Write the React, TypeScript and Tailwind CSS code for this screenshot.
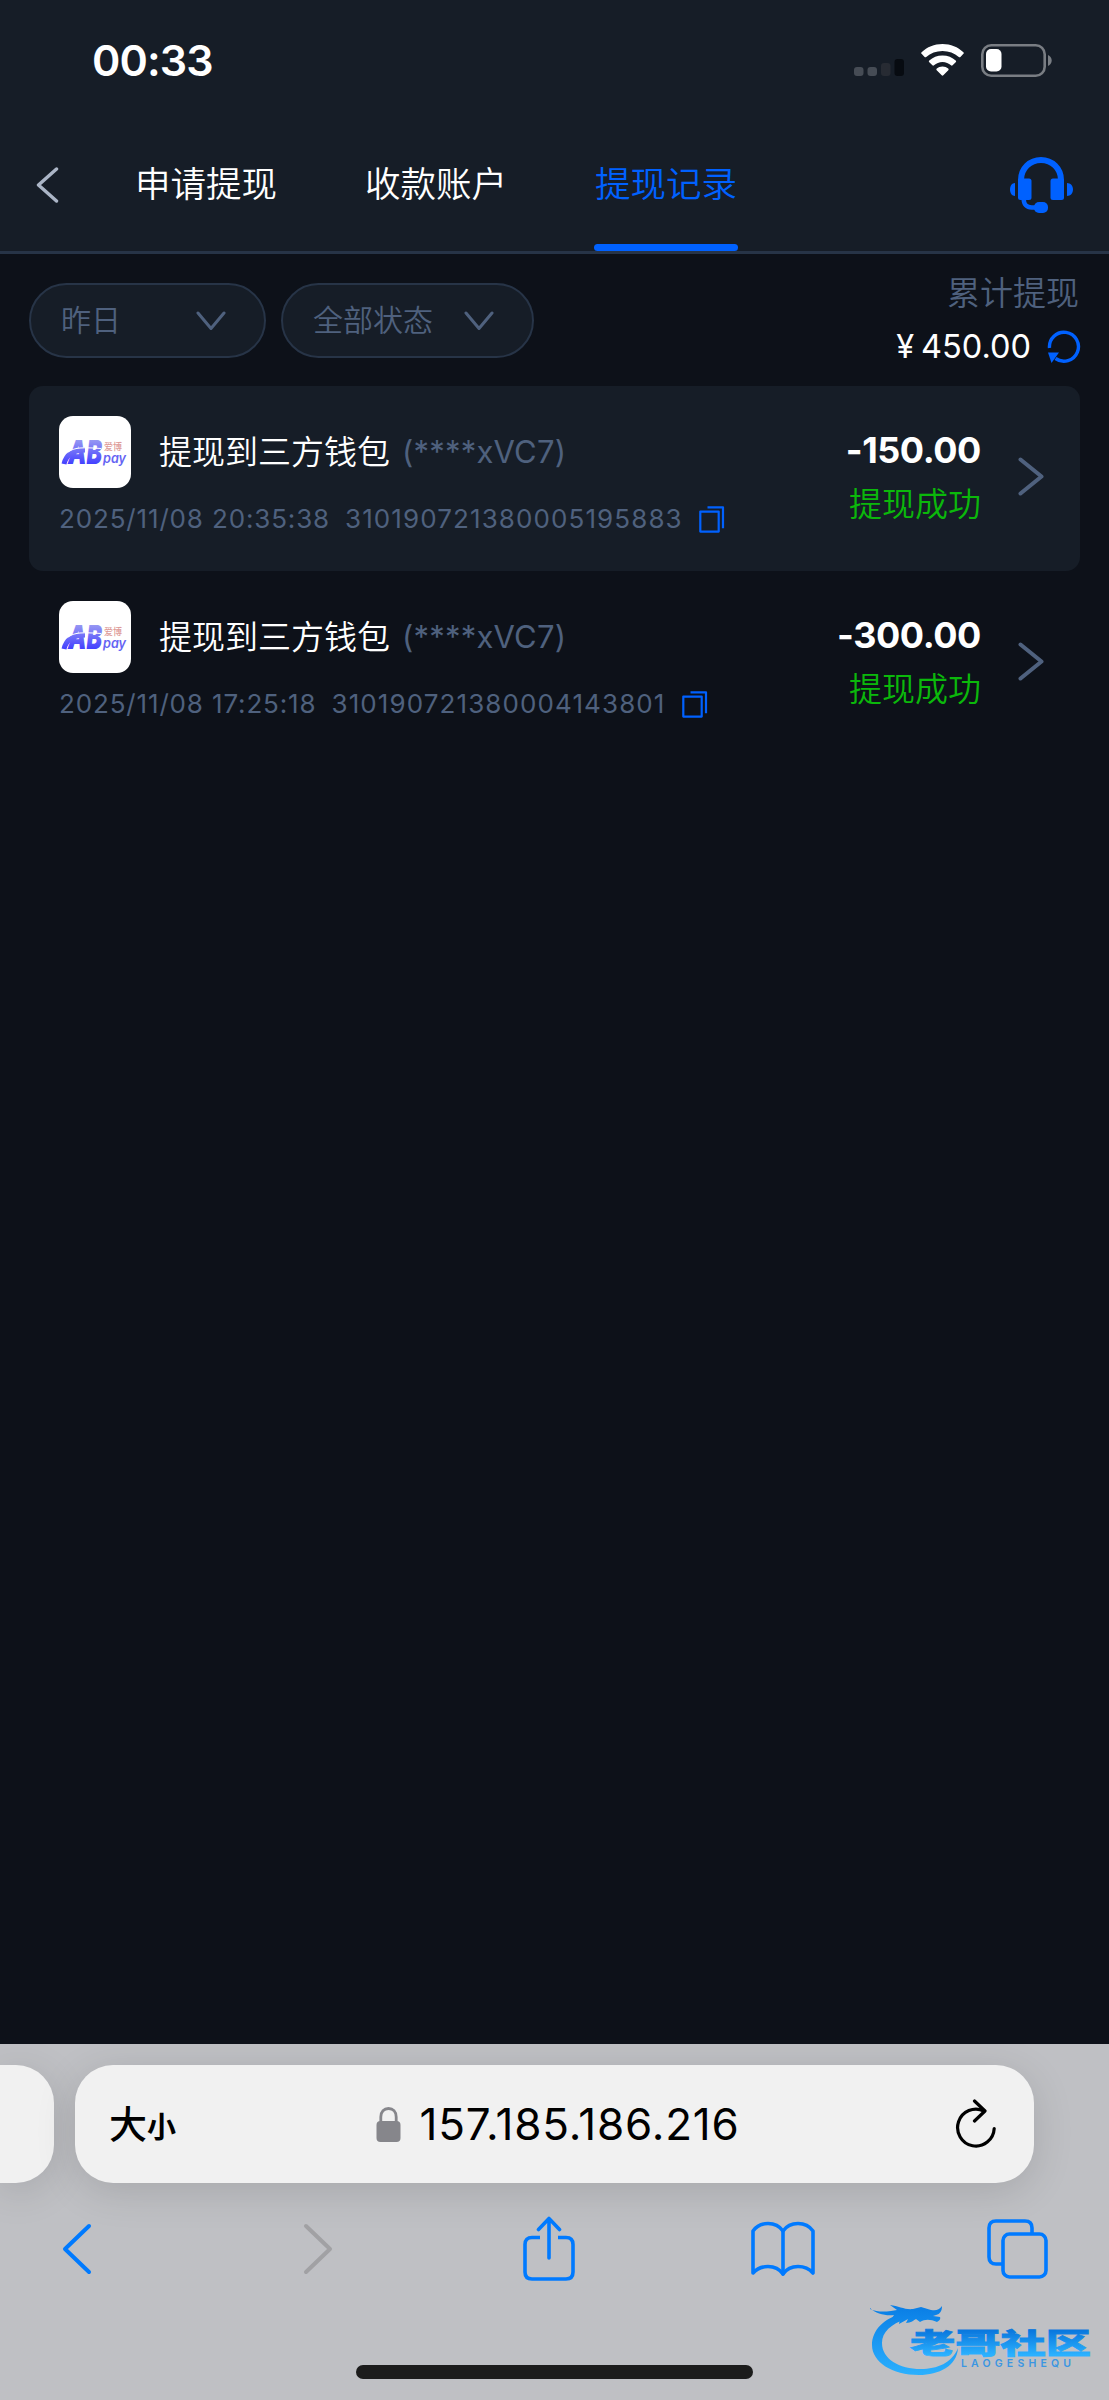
import { useState } from 'react';

type WithdrawRecord = {
  id: string;
  title: string;
  account: string;
  time: string;
  amount: string;
  status: string;
};

const tabs = ['申请提现', '收款账户', '提现记录'];

const records: WithdrawRecord[] = [
  {
    id: '310190721380005195883',
    title: '提现到三方钱包',
    account: '(****xVC7)',
    time: '2025/11/08 20:35:38',
    amount: '-150.00',
    status: '提现成功',
  },
  {
    id: '310190721380004143801',
    title: '提现到三方钱包',
    account: '(****xVC7)',
    time: '2025/11/08 17:25:18',
    amount: '-300.00',
    status: '提现成功',
  },
];

const StatusBar = () => (
  <div className="flex h-[118px] items-start justify-between pl-[92px] pr-[57px]">
    <span className="mt-[38px] text-[43px] leading-[44px] font-semibold tracking-[-0.9px] text-white">00:33</span>
    <div className="mt-[44px] flex h-[33px] items-start">
      <svg width="50" height="33" viewBox="0 0 50 33">
        <rect x="0" y="23" width="9.5" height="9" rx="3" fill="#464c55" />
        <rect x="13.5" y="23" width="9.5" height="9" rx="3" fill="#464c55" />
        <rect x="27" y="19" width="9.5" height="13" rx="3" fill="#272b33" />
        <rect x="40.5" y="15" width="9.5" height="17" rx="3" fill="#070b11" />
      </svg>
      <svg className="ml-[17px]" width="43" height="33" viewBox="0 0 43 33" fill="#fff">
        <path d="M21.5 0C29.7 0 37 3.1 42.4 8.2c.6.6.6 1.1 0 1.6l-3 3.1c-.5.5-1.1.5-1.6 0C33.5 9 27.8 6.9 21.5 6.9S9.5 9 5.2 12.9c-.5.5-1.1.5-1.6 0L.6 9.8c-.6-.5-.6-1 0-1.6C6 3.1 13.3 0 21.5 0Z" />
        <path d="M21.5 11.5c5.2 0 9.8 1.9 13.2 5.1.6.6.6 1.1 0 1.7l-3.1 3c-.5.5-1.1.5-1.6 0-2.3-1.9-5.2-3.2-8.5-3.2s-6.2 1.3-8.5 3.2c-.5.5-1.1.5-1.6 0l-3.1-3c-.6-.6-.6-1.1 0-1.7 3.4-3.2 8-5.1 13.2-5.1Z" />
        <path d="M21.5 22.6c2.2 0 4.2.7 5.7 2 .6.5.6 1.1.1 1.6l-5 5.1c-.5.5-1.1.5-1.6 0l-5-5.1c-.5-.5-.5-1.1.1-1.6 1.5-1.3 3.5-2 5.7-2Z" />
      </svg>
      <svg className="ml-[17px]" width="71" height="33" viewBox="0 0 71 33">
        <rect x="1.3" y="1.3" width="62.4" height="30.4" rx="9" fill="none" stroke="#797d83" strokeWidth="2.6" />
        <rect x="5" y="5" width="15.5" height="22.5" rx="5" fill="#fff" />
        <path d="M67 11c2.3.9 3.7 3 3.7 5.5S69.3 21.1 67 22Z" fill="#797d83" />
      </svg>
    </div>
  </div>
);

const HeadsetIcon = () => (
  <svg width="65" height="58" viewBox="0 0 65 58" fill="#0061ff">
    <path d="M12 26V24C12 12.5 21 4 32 4s20 8.5 20 20v2" fill="none" stroke="#0061ff" strokeWidth="6" />
    <rect x="9" y="22.5" width="13.5" height="21.5" rx="2.5" />
    <rect x="41.5" y="22.5" width="13.5" height="21.5" rx="2.5" />
    <path d="M6 27v13c-3 0-5-2.8-5-6.5S3 27 6 27Z" />
    <path d="M58 27v13c3.5 0 6-2.8 6-6.5S61.5 27 58 27Z" />
    <path d="M14.7 43c0 5.5 3 8.5 8 8.5H30" fill="none" stroke="#0061ff" strokeWidth="4.5" />
    <rect x="25" y="46" width="14" height="11" rx="5" />
  </svg>
);

const ChevronDown = () => (
  <svg width="30" height="20" viewBox="0 0 30 20" fill="none" stroke="#4f617e" strokeWidth="3" strokeLinecap="round" strokeLinejoin="round">
    <path d="M2 2L15 17.5L28 2" />
  </svg>
);

const CopyIcon = () => (
  <svg width="26" height="27" viewBox="0 0 26 27" fill="none" stroke="#0061ff" strokeWidth="2.2" strokeLinejoin="round">
    <path d="M1.3 5.6h18.4v20H1.3Z" />
    <path d="M8.5 1.3H24v21" />
  </svg>
);

const WalletLogo = () => (
  <svg className="rounded-[14px] bg-white" width="72" height="72" viewBox="0 0 72 72">
    <defs>
      <linearGradient id="ab" x1="0" y1="23" x2="0" y2="48" gradientUnits="userSpaceOnUse">
        <stop offset="0" stopColor="#9a9bf2" />
        <stop offset="1" stopColor="#4340ff" />
      </linearGradient>
    </defs>
    <text x="9" y="48" fontSize="33" fontWeight="900" fontStyle="italic" textLength="34" lengthAdjust="spacingAndGlyphs" fill="url(#ab)">AB</text>
    <path d="M5 48C7 39 14 34 26 34" fill="none" stroke="url(#ab)" strokeWidth="5" />
    <path d="M9 36C15 31.5 24 31 42 32.5" fill="none" stroke="#fff" strokeWidth="1.2" />
    <text x="45" y="34" fontSize="9.5" fontWeight="500" textLength="18" lengthAdjust="spacingAndGlyphs" fill="#dd9a98">爱博</text>
    <text x="44" y="47" fontSize="13" fontWeight="600" fontStyle="italic" textLength="23" lengthAdjust="spacingAndGlyphs" fill="#6564f3">pay</text>
  </svg>
);

const RecordItem = ({ record, highlighted }: { record: WithdrawRecord; highlighted: boolean }) => (
  <div className={`flex h-[185px] rounded-[14px] pl-[30px] ${highlighted ? 'bg-[#161d27]' : ''}`}>
    <div className="flex flex-1 flex-col pt-[30px]">
      <div className="flex h-[72px] items-center">
        <WalletLogo />
        <span className="ml-[28px] text-[33px] leading-[36px] font-[350] text-white">{record.title}</span>
        <span className="ml-[12px] text-[31px] leading-[36px] tracking-[0.2px] text-[#4f617e]">{record.account}</span>
      </div>
      <div className="mt-[14px] flex h-[34px] items-center text-[26px] leading-[34px] text-[#4f617e]">
        <span className="tracking-[0.85px]">{record.time}</span>
        <span className="ml-[15px] tracking-[1.1px]">{record.id}</span>
        <button className="ml-[16px]">
          <CopyIcon />
        </button>
      </div>
    </div>
    <div className="flex flex-col items-end pt-[44px]">
      <span className="text-[36px] leading-[40px] font-bold tracking-[-0.4px] text-white">{record.amount}</span>
      <span className="mt-[14px] text-[33px] leading-[40px] font-[350] text-[#0bb80b]">{record.status}</span>
    </div>
    <svg className="mt-[71px] mr-[36px] ml-[37px]" width="26" height="39" viewBox="0 0 26 39" fill="none" stroke="#4f617e" strokeWidth="4" strokeLinecap="round" strokeLinejoin="round">
      <path d="M2.5 2.5L23.5 19.5L2.5 36.5" />
    </svg>
  </div>
);

const SiteLogo = () => (
  <svg width="222" height="76" viewBox="0 0 222 76">
    <defs>
      <linearGradient id="dragon" x1="0" y1="4" x2="0" y2="72" gradientUnits="userSpaceOnUse">
        <stop offset="0" stopColor="#0a7fe6" />
        <stop offset="1" stopColor="#2bb1ff" />
      </linearGradient>
      <linearGradient id="brand" x1="0" y1="26" x2="0" y2="56" gradientUnits="userSpaceOnUse">
        <stop offset="0" stopColor="#0a78de" />
        <stop offset="1" stopColor="#2bb1ff" />
      </linearGradient>
    </defs>
    <g fill="url(#dragon)">
      <path d="M34 9C14 14 2 26 2 41c0 17 20 30 47 30 20 0 38-9 39-27-6 15-21 21-37 21-22 0-39-10-39-26 0-11 9-19 24-24Z" />
      <path d="M0 5c7 3 13 3 21 2l6-1-7-5c9 1 15 5 23 4l8-2 10 3c5 1 8 0 11-4 0 5-2 8-6 9l-3 1 7 1c1 2-1 4-3 5-7-3-12-3-17 0l-4-3c-2 1-5 4-10 4l2-4-9 5 1-6-10 3 4-6c-8 1-18-1-24-7Z" />
    </g>
    <text x="40" y="54.5" fontSize="36" fontWeight="900" textLength="181" lengthAdjust="spacingAndGlyphs" fill="url(#brand)" stroke="url(#brand)" strokeWidth="1" transform="translate(0 6) scale(1 .8)">老哥社区</text>
    <text x="91" y="63" fontSize="10.5" fontWeight="600" textLength="110" fill="#3a96e2">LAOGESHEQU</text>
  </svg>
);

const BrowserBar = () => (
  <div className="flex h-[356px] flex-col overflow-hidden bg-[#bfc0c4] pt-[21px]">
    <div className="flex h-[118px] gap-[21px]">
      <div className="w-[54px] rounded-r-[38px] bg-[#f1f1f1] shadow-[0_8px_40px_rgba(0,0,0,0.13)]" />
      <div className="flex w-[959px] items-center rounded-[38px] bg-[#f1f1f1] pr-[37px] pl-[34px] text-black shadow-[0_8px_40px_rgba(0,0,0,0.13)]">
        <span className="mt-[3px] flex items-baseline">
          <span className="text-[38px] leading-[50px] font-medium">大</span>
          <span className="text-[29px] leading-[50px] font-bold">小</span>
        </span>
        <div className="flex flex-1 items-center justify-center pr-[15px]">
          <svg width="25" height="35" viewBox="0 0 25 35">
            <rect x="0.5" y="14" width="24" height="21" rx="4" fill="#86868b" />
            <path d="M4.8 16V10C4.8 4.5 8 1.5 12.5 1.5S20.2 4.5 20.2 10v6" fill="none" stroke="#86868b" strokeWidth="2.8" />
          </svg>
          <span className="ml-[18px] text-[44px] leading-[50px] tracking-[0.8px]">157.185.186.216</span>
        </div>
        <svg width="42" height="50" viewBox="0 0 42 50" fill="none" stroke="#000" strokeWidth="3.2" strokeLinecap="round" strokeLinejoin="round">
          <path d="M39.2 29.5A18.3 18.5 0 1 1 29 12" />
          <path d="M19.5 2L30 12L19.5 22" />
        </svg>
      </div>
    </div>
    <div className="mt-[33px] flex h-[66px] items-center pl-[62px]">
      <svg width="30" height="52" viewBox="0 0 30 52" fill="none" stroke="#007aff" strokeWidth="4" strokeLinecap="round" strokeLinejoin="round">
        <path d="M27 3L3 26L27 49" />
      </svg>
      <svg className="ml-[211px]" width="30" height="52" viewBox="0 0 30 52" fill="none" stroke="#a1a1a4" strokeWidth="4" strokeLinecap="round" strokeLinejoin="round">
        <path d="M3 3L27 26L3 49" />
      </svg>
      <svg className="ml-[190px]" width="52" height="66" viewBox="0 0 52 66" fill="none" stroke="#007aff" strokeWidth="3.6" strokeLinecap="round" strokeLinejoin="round">
        <path d="M17 21.5H9c-4.500 0-7 2.500-7 7V56c0 4.500 2.500 7 7 7h34c4.500 0 7-2.500 7-7V28.500c0-4.500-2.500-7-7-7h-8" strokeLinecap="butt" />
        <path d="M26 42V3M15.5 13.5L26 2.5L36.5 13.5" />
      </svg>
      <svg className="ml-[176px]" width="64" height="56" viewBox="0 0 64 56" fill="none" stroke="#007aff" strokeWidth="3.6" strokeLinecap="round" strokeLinejoin="round">
        <path d="M32 10C28.5 5 23.5 2.5 17 2.5S5.5 5 2 10v42c3.5-4 8.5-6.5 15-6.5S28.5 48 32 53c3.5-5 8.500-7.500 15-7.500S58.500 48 62 52V10C58.500 5 53.500 2.500 47 2.500S35.500 5 32 10Z" />
        <path d="M32 10V53" />
      </svg>
      <svg className="ml-[172px]" width="61" height="60" viewBox="0 0 61 60" fill="none" stroke="#007aff" strokeWidth="3.6">
        <rect x="16" y="15" width="43" height="43" rx="6.5" />
        <path d="M16 45H9c-4.5 0-7-2.5-7-7V9c0-4.5 2.5-7 7-7h29c4.5 0 7 2.5 7 7v6" />
      </svg>
    </div>
    <div className="relative flex flex-1 items-end justify-center pb-[21px]">
      <div className="h-[14px] w-[397px] rounded-full bg-[#1c1c1c]" />
      <div className="absolute top-[22px] right-[17px]">
        <SiteLogo />
      </div>
    </div>
  </div>
);

const App = () => {
  const [activeTab, setActiveTab] = useState(2);

  return (
    <div className="flex h-[2400px] w-[1109px] flex-col overflow-hidden bg-[#0d1119] font-['Inter','Noto_Sans_CJK_SC',sans-serif]">
      {/* Header */}
      <header className="bg-[#161d27]">
        <StatusBar />
        <nav className="flex h-[136px] items-center border-b-3 border-[#273447] pr-[35px] pl-[36px]">
          <svg width="23" height="36" viewBox="0 0 23 36" fill="none" stroke="#abb5c6" strokeWidth="3.4" strokeLinecap="round" strokeLinejoin="round">
            <path d="M20.5 2L2.5 18L20.5 34" />
          </svg>
          <div className="ml-[75px] flex h-full flex-1 gap-[86px]">
            {tabs.map((tab, index) => (
              <button
                key={tab}
                onClick={() => setActiveTab(index)}
                className={`flex h-full w-[144px] flex-col items-center text-[35.5px] leading-[40px] font-[350] ${
                  index === activeTab ? 'text-[#0061ff]' : 'text-white'
                }`}
              >
                <span className="mt-[47px] whitespace-nowrap">{tab}</span>
                {index === activeTab && <span className="mt-auto h-[7px] w-full rounded-full bg-[#0061ff]" />}
              </button>
            ))}
          </div>
          <HeadsetIcon />
        </nav>
      </header>

      {/* Filters */}
      <div className="flex h-[132px] items-start justify-between pt-[29px] pr-[28px] pl-[29px]">
        <div className="flex gap-[15px] font-[350]">
          <button className="flex h-[75px] w-[237px] items-center justify-between rounded-full border-2 border-[#273447] bg-[#161d27] pr-[38px] pl-[30px] text-[30px] text-[#4f617e]">
            昨日
            <ChevronDown />
          </button>
          <button className="flex h-[75px] w-[253px] items-center justify-between rounded-full border-2 border-[#273447] bg-[#161d27] pr-[38px] pl-[30px] text-[30px] text-[#4f617e]">
            全部状态
            <ChevronDown />
          </button>
        </div>
        <div className="-mt-[10px] flex flex-col items-end">
          <span className="mr-[2px] text-[33px] leading-[40px] font-[350] text-[#4f617e]">累计提现</span>
          <div className="mt-[13px] flex items-center text-[32.5px] leading-[42px] text-white">
            <span>¥</span>
            <span className="ml-[7px]">450.00</span>
            <svg className="ml-[16px]" width="34" height="34" viewBox="0 0 34 34">
              <path d="M2.5 18A14.5 14.5 0 1 1 8.5 28.5" fill="none" stroke="#0061ff" strokeWidth="3.4" />
              <path d="M1 22.5H12L4.5 33Z" fill="#0061ff" />
            </svg>
          </div>
        </div>
      </div>

      {/* Records */}
      <main className="flex-1 pr-[29px] pl-[29px]">
        {records.map((record, index) => (
          <RecordItem key={record.id} record={record} highlighted={index % 2 === 0} />
        ))}
      </main>

      <BrowserBar />
    </div>
  );
};

export default App;
